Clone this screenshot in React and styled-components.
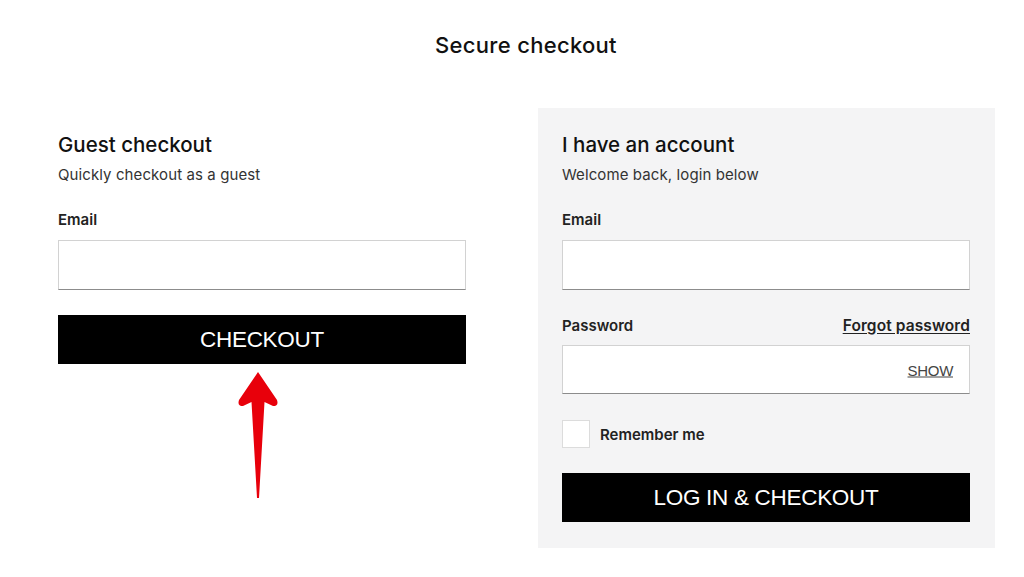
import React from "react";
import styled, { createGlobalStyle } from "styled-components";

const GlobalStyle = createGlobalStyle`
  body {
    margin: 0;
    background: #fff;
    font-family: Inter, "Noto Sans", sans-serif;
    color: #111;
  }
`;

const Page = styled.div`
  width: 1024px;
  height: 577px;
  overflow: hidden;
  padding-top: 32px;
  box-sizing: border-box;
`;

const PageTitle = styled.h1`
  margin: 0;
  padding-left: 28px;
  text-align: center;
  font-size: 22px;
  line-height: 26px;
  font-weight: 500;
  letter-spacing: 0.3px;
`;

const Columns = styled.div`
  display: grid;
  grid-template-columns: 408px 457px;
  column-gap: 72px;
  padding-left: 58px;
  margin-top: 50px;
  align-items: start;
`;

const Section = styled.section`
  display: flex;
  flex-direction: column;
  padding-top: 25px;
  ${({ panel }) =>
    panel &&
    `
    background: #f4f4f5;
    padding: 25px 25px 26px 24px;
  `}
`;

const Heading = styled.h2`
  margin: 0;
  font-size: 20.5px;
  line-height: 24px;
  font-weight: 500;
`;

const Subtitle = styled.p`
  margin: 8px 0 0;
  font-size: 15px;
  line-height: 20px;
  color: #333;
  letter-spacing: 0.1px;
`;

const LabelRow = styled.div`
  display: flex;
  justify-content: space-between;
  align-items: center;
  margin-top: ${({ top }) => top}px;
  height: 20px;
`;

const Label = styled.label`
  font-size: 15px;
  font-weight: 600;
  color: #222;
`;

const ForgotLink = styled.a`
  font-size: 15.5px;
  font-weight: 600;
  color: #222;
  text-decoration: underline;
  text-underline-offset: 2px;
  letter-spacing: 0.1px;
`;

const Field = styled.div`
  position: relative;
  margin-top: ${({ top }) => top}px;
  height: ${({ h }) => h}px;
  box-sizing: border-box;
  background: #fff;
  border: 1px solid #d2d2d2;
  border-bottom-color: #8c8c8c;
`;

const Input = styled.input`
  width: 100%;
  height: 100%;
  border: 0;
  outline: none;
  background: transparent;
  padding: 0 14px;
  box-sizing: border-box;
  font-size: 15px;
`;

const ShowToggle = styled.span`
  position: absolute;
  right: 16px;
  top: 50%;
  transform: translateY(-50%);
  font-family: "Liberation Sans", Arial, sans-serif;
  font-size: 15px;
  color: #444;
  text-decoration: underline;
  letter-spacing: -0.3px;
`;

const CheckRow = styled.div`
  display: flex;
  align-items: center;
  gap: 10px;
  margin-top: 26px;
`;

const CheckBox = styled.span`
  width: 28px;
  height: 28px;
  box-sizing: border-box;
  background: #fff;
  border: 1px solid #dcdcdc;
`;

const ButtonWrap = styled.div`
  position: relative;
  margin-top: 25px;
`;

const Button = styled.button`
  display: block;
  width: 100%;
  height: 49px;
  border: 0;
  background: #000;
  color: #fff;
  font-family: "Liberation Sans", Arial, sans-serif;
  font-size: 22.5px;
  letter-spacing: -0.3px;
  cursor: pointer;
`;

const Arrow = styled.svg`
  position: absolute;
  left: 175px;
  top: calc(100% + 8px);
`;

const RedArrow = () => (
  <Arrow width="50" height="128" viewBox="0 0 50 128">
    <path
      d="M25 0 L44 28 Q46 34 40 34 L31.5 30 L26 126 L24 126 L18.5 30 L10 34 Q4 34 6 28 Z"
      fill="#e8000b"
    />
  </Arrow>
);

export default function App() {
  return (
    <Page>
      <GlobalStyle />
      <PageTitle>Secure checkout</PageTitle>
      <Columns>
        <Section>
          <Heading>Guest checkout</Heading>
          <Subtitle>Quickly checkout as a guest</Subtitle>
          <LabelRow top={24}>
            <Label>Email</Label>
          </LabelRow>
          <Field top={11} h={50}>
            <Input type="email" />
          </Field>
          <ButtonWrap>
            <Button>CHECKOUT</Button>
            <RedArrow />
          </ButtonWrap>
        </Section>

        <Section panel>
          <Heading>I have an account</Heading>
          <Subtitle>Welcome back, login below</Subtitle>
          <LabelRow top={24}>
            <Label>Email</Label>
          </LabelRow>
          <Field top={11} h={50}>
            <Input type="email" />
          </Field>
          <LabelRow top={25}>
            <Label>Password</Label>
            <ForgotLink href="#">Forgot password</ForgotLink>
          </LabelRow>
          <Field top={10} h={49}>
            <Input type="password" />
            <ShowToggle>SHOW</ShowToggle>
          </Field>
          <CheckRow>
            <CheckBox />
            <Label>Remember me</Label>
          </CheckRow>
          <ButtonWrap>
            <Button>LOG IN &amp; CHECKOUT</Button>
          </ButtonWrap>
        </Section>
      </Columns>
    </Page>
  );
}
